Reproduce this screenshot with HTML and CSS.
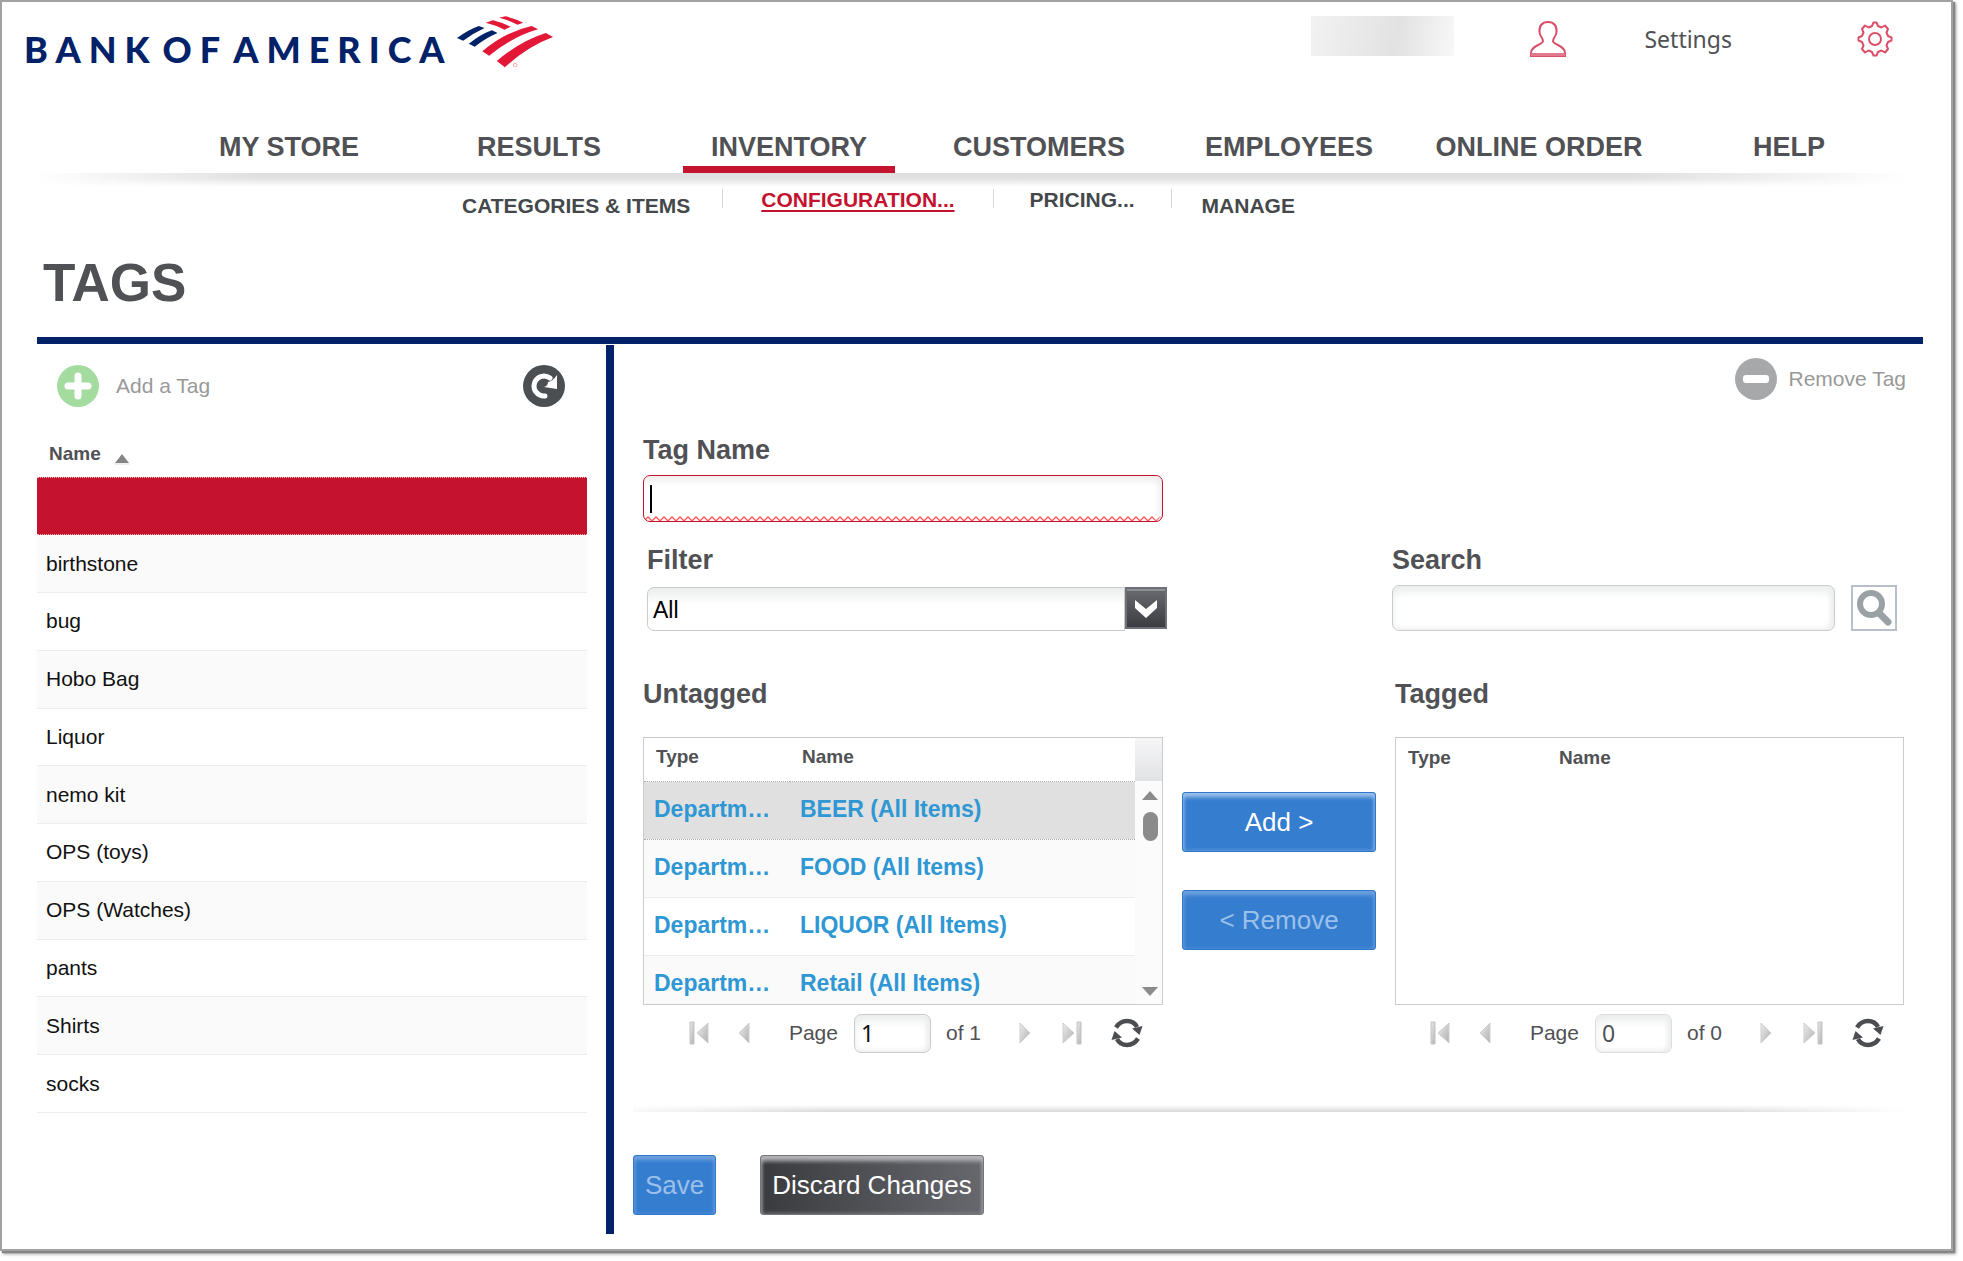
FILE: index.html
```html
<!DOCTYPE html>
<html lang="en">
<head>
<meta charset="utf-8">
<title>Tags</title>
<link rel="stylesheet" href="styles.css">
</head>
<body>
<svg class="sprite" aria-hidden="true">
  <defs>
    <linearGradient id="arrow-fill" x1="0" y1="0" x2="1" y2="1">
      <stop offset="0" stop-color="#ececec"/>
      <stop offset="1" stop-color="#b0b0b0"/>
    </linearGradient>
    <symbol id="first" viewBox="0 0 20 26">
      <path d="M1 2h4v22H1z" fill="url(#arrow-fill)" stroke="#c4c4c4"/>
      <path d="M19 3v20L8 13z" fill="url(#arrow-fill)" stroke="#cfcfcf"/>
    </symbol>
    <symbol id="prev" viewBox="0 0 12 26"><path d="M11 3v20L1 13z" fill="url(#arrow-fill)" stroke="#cfcfcf"/></symbol>
    <symbol id="next" viewBox="0 0 12 26"><path d="M1 3v20l10-10z" fill="url(#arrow-fill)" stroke="#cfcfcf"/></symbol>
    <symbol id="last" viewBox="0 0 20 26">
      <path d="M1 3v20l11-10z" fill="url(#arrow-fill)" stroke="#cfcfcf"/>
      <path d="M15 2h4v22h-4z" fill="url(#arrow-fill)" stroke="#c4c4c4"/>
    </symbol>
    <symbol id="reload" viewBox="0 0 32 30">
      <path d="M5 9.500Q9 3 16 3Q23 3 26 9" fill="none" stroke="#4b4d50" stroke-width="4.500"/>
      <path d="M21 10.500L31.500 8L28.500 17Z" fill="#4b4d50"/>
      <path d="M27 20.500Q23 27 16 27Q9 27 6 21" fill="none" stroke="#4b4d50" stroke-width="4.500"/>
      <path d="M11 19.500L.5 22L3.500 13Z" fill="#4b4d50"/>
    </symbol>
  </defs>
</svg>
<div class="page">
  <header class="header">
    <div class="logo">
      <div class="wordmark"><span>BANK</span> <span>OF</span> <span>AMERICA</span></div>
      <svg class="flag" viewBox="0 0 97 52" aria-hidden="true">
        <g transform="scale(.3827 .3333) translate(-1198 -46)">
          <path d="M1198 112Q1228 87 1255 76L1270 82Q1243 96 1214 120Z" fill="#012169"/>
          <path d="M1229 129Q1260 101 1289 89L1304 97Q1275 111 1244 138Z" fill="#012169"/>
          <path d="M1308 51L1325 47Q1350 54 1371 66L1356 72Q1333 58 1308 51Z" fill="#e31837"/>
          <path d="M1273 66L1292 59Q1317 66 1338 78L1322 87Q1299 73 1273 66Z" fill="#e31837"/>
          <path d="M1264 152Q1325 93 1393 76L1410 86Q1345 107 1282 165Z" fill="#e31837"/>
          <path d="M1302 181Q1365 120 1430 97L1449 109Q1382 137 1323 200Z" fill="#e31837"/>
          <circle cx="1350" cy="193" r="5" fill="none" stroke="#f08a98" stroke-width="2"/>
        </g>
      </svg>
    </div>
    <div class="account">
      <span class="user-name"></span>
      <svg class="person" viewBox="0 0 38 38" aria-hidden="true">
        <path d="M19 2C13 2 10 6 10.500 12C11 17 14 18 14 21C14 25 2 25 2 33V36H36V33C36 25 24 25 24 21C24 18 27 17 27.500 12C28 6 25 2 19 2Z" fill="none" stroke="#dc4f68" stroke-width="2"/>
        <path d="M2 34.500H36" stroke="#e4798c" stroke-width="3"/>
      </svg>
      <a class="settings" href="#settings">Settings</a>
      <svg class="gear" viewBox="0 0 36 36" aria-hidden="true">
        <path d="M15 5L16.500 1.500H19.500L21 5L24.500 6.500L28 4.500L31 8L29.500 11.500L31 15L34.500 16.500V19.500L31 21L29.500 24.500L31 28L28 31.500L24.500 29.500L21 31L19.500 34.500H16.500L15 31L11.500 29.500L8 31.500L5 28L6.500 24.500L5 21L1.500 19.500V16.500L5 15L6.500 11.500L5 8L8 4.500L11.500 6.500Z" fill="none" stroke="#dc4f68" stroke-width="2" stroke-linejoin="round"/>
        <circle cx="18" cy="18" r="6" fill="none" stroke="#dc4f68" stroke-width="2"/>
      </svg>
    </div>
  </header>

  <nav class="main-nav" aria-label="Main">
    <div class="nav-cell"><a href="#store">MY STORE</a></div>
    <div class="nav-cell"><a href="#results">RESULTS</a></div>
    <div class="nav-cell"><a class="current" href="#inventory">INVENTORY</a></div>
    <div class="nav-cell"><a href="#customers">CUSTOMERS</a></div>
    <div class="nav-cell"><a href="#employees">EMPLOYEES</a></div>
    <div class="nav-cell"><a href="#orders">ONLINE ORDER</a></div>
    <div class="nav-cell"><a href="#help">HELP</a></div>
  </nav>
  <div class="nav-shadow"></div>
  <nav class="sub-nav" aria-label="Inventory">
    <a class="plain" href="#categories">CATEGORIES &amp; ITEMS</a>
    <span class="bar"></span>
    <a class="current" href="#configuration">CONFIGURATION...</a>
    <span class="bar"></span>
    <a href="#pricing">PRICING...</a>
    <span class="bar"></span>
    <a class="plain" href="#manage">MANAGE</a>
  </nav>

  <main class="main">
    <h1 class="title">TAGS</h1>
    <div class="panels">
      <section class="tags">
        <div class="tags-tools">
          <button class="tool" type="button">
            <svg width="42" height="42" viewBox="0 0 42 42" aria-hidden="true"><circle cx="21" cy="21" r="21" fill="#a3dc9e"/><path d="M21 11v20M11 21h20" stroke="#fff" stroke-width="7" stroke-linecap="round"/></svg>
            Add a Tag
          </button>
          <button class="tool" type="button" aria-label="Refresh">
            <svg width="42" height="42" viewBox="0 0 42 42" aria-hidden="true"><circle cx="21" cy="21" r="21" fill="#4b4f52"/><path d="M22 31A10 10 0 1 1 27 13" fill="none" stroke="#fff" stroke-width="5" stroke-linecap="round"/><path d="M34 10V24L21 22Q25 21 25 17Q30 16 34 10Z" fill="#fff"/></svg>
          </button>
        </div>
        <table class="tag-list">
          <thead><tr><th>Name <svg width="16" height="11" viewBox="0 0 16 11" aria-hidden="true"><path d="M8 0l7 9H1z" fill="#858585"/><path d="M0 10h16" stroke="#ddd"/></svg></th></tr></thead>
          <tbody>
            <tr class="selected"><td></td></tr>
            <tr><td>birthstone</td></tr>
            <tr><td>bug</td></tr>
            <tr><td>Hobo Bag</td></tr>
            <tr><td>Liquor</td></tr>
            <tr><td>nemo kit</td></tr>
            <tr><td>OPS (toys)</td></tr>
            <tr><td>OPS (Watches)</td></tr>
            <tr><td>pants</td></tr>
            <tr><td>Shirts</td></tr>
            <tr><td>socks</td></tr>
          </tbody>
        </table>
      </section>

      <section class="detail">
        <div class="detail-tools">
          <button class="tool tool-remove" type="button">
            <svg width="42" height="42" viewBox="0 0 42 42" aria-hidden="true"><circle cx="21" cy="21" r="21" fill="#a7a8aa"/><rect x="8" y="17" width="26" height="8" rx="3" fill="#fff"/></svg>
            Remove Tag
          </button>
        </div>
        <div class="editor">
          <div class="field field-name">
            <label for="tag-name">Tag Name</label>
            <input class="box invalid" id="tag-name" type="text">
          </div>
          <div class="field field-filter">
            <label for="filter">Filter</label>
            <div class="combo">
              <select id="filter"><option>All</option></select>
              <svg class="combo-arrow" viewBox="0 0 42 42" aria-hidden="true">
                <defs><linearGradient id="combo-fill" x1="0" y1="0" x2="0" y2="1"><stop offset="0" stop-color="#696b70"/><stop offset="1" stop-color="#3b3c40"/></linearGradient></defs>
                <rect x="1" y="1" width="40" height="40" fill="url(#combo-fill)" stroke="#6d7077" stroke-width="2"/>
                <path d="M2 3H40" stroke="#8c8f96" stroke-width="2"/>
                <path d="M10 13L21 22L32 13V21L21 31L10 21Z" fill="#fff"/>
              </svg>
            </div>
          </div>
          <div class="field field-search">
            <label for="search">Search</label>
            <div class="search">
              <input class="box" id="search" type="text">
              <button class="search-go" type="button" aria-label="Search">
                <svg width="38" height="38" viewBox="0 0 38 38" aria-hidden="true"><circle cx="16" cy="15" r="11" fill="none" stroke="#9aa1a5" stroke-width="6"/><path d="M24 24L33 33" stroke="#9aa1a5" stroke-width="7" stroke-linecap="round"/></svg>
              </button>
            </div>
          </div>

          <div class="list untagged">
            <h2>Untagged</h2>
            <div class="grid-box">
              <table class="items">
                <thead><tr><th class="type">Type</th><th>Name</th></tr></thead>
                <tbody>
                  <tr class="active"><td>Department</td><td>BEER (All Items)</td></tr>
                  <tr><td>Department</td><td>FOOD (All Items)</td></tr>
                  <tr><td>Department</td><td>LIQUOR (All Items)</td></tr>
                  <tr><td>Department</td><td>Retail (All Items)</td></tr>
                </tbody>
              </table>
              <div class="scroll" aria-hidden="true">
                <div class="scroll-top"></div>
                <div class="scroll-track">
                  <svg width="16" height="9" viewBox="0 0 16 9"><path d="M8 0l8 9H0z" fill="#8b8b8b"/></svg>
                  <div class="thumb"></div>
                  <svg width="16" height="9" viewBox="0 0 16 9"><path d="M8 9l8-9H0z" fill="#8b8b8b"/></svg>
                </div>
              </div>
            </div>
            <div class="pager">
              <button type="button" aria-label="First page"><svg width="20" height="26"><use href="#first"/></svg></button>
              <button class="prev" type="button" aria-label="Previous page"><svg width="12" height="26"><use href="#prev"/></svg></button>
              <label for="page-untagged">Page</label>
              <input class="box" id="page-untagged" type="text" value="1">
              <span class="total">of 1</span>
              <button type="button" aria-label="Next page"><svg width="12" height="26"><use href="#next"/></svg></button>
              <button class="last" type="button" aria-label="Last page"><svg width="20" height="26"><use href="#last"/></svg></button>
              <button type="button" aria-label="Reload"><svg width="32" height="30"><use href="#reload"/></svg></button>
            </div>
          </div>

          <div class="moves">
            <button class="btn blue" type="button">Add &gt;</button>
            <button class="btn blue" type="button" disabled>&lt; Remove</button>
          </div>

          <div class="list tagged">
            <h2>Tagged</h2>
            <div class="grid-box">
              <table class="items">
                <thead><tr><th class="type">Type</th><th>Name</th></tr></thead>
              </table>
            </div>
            <div class="pager">
              <button type="button" aria-label="First page"><svg width="20" height="26"><use href="#first"/></svg></button>
              <button class="prev" type="button" aria-label="Previous page"><svg width="12" height="26"><use href="#prev"/></svg></button>
              <label for="page-tagged">Page</label>
              <input class="box muted" id="page-tagged" type="text" value="0">
              <span class="total">of 0</span>
              <button type="button" aria-label="Next page"><svg width="12" height="26"><use href="#next"/></svg></button>
              <button class="last" type="button" aria-label="Last page"><svg width="20" height="26"><use href="#last"/></svg></button>
              <button type="button" aria-label="Reload"><svg width="32" height="30"><use href="#reload"/></svg></button>
            </div>
          </div>
        </div>
        <div class="divider"></div>
        <div class="actions">
          <button class="btn blue" type="button" disabled>Save</button>
          <button class="btn dark" type="button">Discard Changes</button>
        </div>
      </section>
    </div>
  </main>
</div>
</body>
</html>
```
FILE: styles.css
```css
* { box-sizing: border-box; }

body {
  margin: 0;
  padding: 0 10px 10px 0;
  background: #fff;
  color: #505154;
  font: 21px/30px "Liberation Sans", Arial, sans-serif;
}

button, input, select { font: inherit; color: inherit; }
button { padding: 0; border: 0; background: none; }
svg { display: block; flex: none; }
a { color: inherit; text-decoration: none; }
h1, h2 { margin: 0; }

.sprite { position: absolute; width: 0; height: 0; }

.page {
  border: 2px solid #a2a2a2;
  box-shadow: 2px 2px 1px #868686, 3px 3px 3px #999;
}

/* Header */
.header {
  display: flex;
  justify-content: space-between;
  align-items: flex-start;
  height: 118px;
  padding: 14px 58px 0 22px;
}
.logo { display: flex; gap: 4px; }
.wordmark {
  display: flex;
  gap: 5px;
  padding-top: 13px;
  color: #012169;
  font: 900 36px/40px Lato, sans-serif;
  letter-spacing: 8px;
  white-space: nowrap;
}
.flag { width: 97px; height: 52px; }
.account { display: flex; }
.user-name {
  width: 143px;
  height: 40px;
  margin-right: 75px;
  background: linear-gradient(100deg, #f2f2f2, #e2e2e2 60%, #f8f8f8);
}
.person { width: 38px; height: 38px; margin: 4px 77px 0 0; }
.settings { margin: 8px 125px 0 0; font: 23px/30px "Noto Sans", sans-serif; }
.gear { width: 36px; height: 36px; margin-top: 5px; }

.main-nav {
  display: flex;
  padding: 0 37px 0 162px;
  font-size: 27px;
  font-weight: bold;
}
.nav-cell { flex: 1; display: flex; justify-content: center; min-width: 0; white-space: nowrap; }
.nav-cell a { height: 53px; padding: 12px 22px 0; }
.nav-cell .current { padding: 12px 28px 0; border-bottom: 7px solid #c4122f; }
.nav-shadow {
  height: 14px;
  margin: 0 42px 0 32px;
  background: linear-gradient(#dedede, #e2e2e2 40%, #fff);
  -webkit-mask-image: linear-gradient(90deg, transparent, #000 12%, #000 85%, transparent);
  mask-image: linear-gradient(90deg, transparent, #000 12%, #000 85%, transparent);
}
.sub-nav {
  display: flex;
  height: 37px;
  padding-left: 460px;
  color: #44484a;
  font-size: 21px;
  font-weight: bold;
  line-height: 26px;
}
.sub-nav .plain { padding-top: 6px; }
.sub-nav .current { color: #c4122f; text-decoration: underline; text-decoration-thickness: 2px; text-underline-offset: 3px; }
.bar { width: 1px; height: 19px; margin: 2px 36px 0 38px; background: #d6d6d6; }
.bar:first-of-type { margin: 2px 38px 0 32px; }
.bar:last-of-type { margin: 2px 30px 0 36px; }

/* Page body */
.main { padding: 0 28px 15px 35px; }
.title {
  height: 120px;
  padding: 26px 0 0 6px;
  border-bottom: 7px solid #012169;
  font-size: 53px;
  line-height: 66px;
}
.panels { display: flex; margin-top: 1px; }

/* Tag list */
.tags { flex: 0 0 550px; padding-top: 20px; }
.tags-tools { display: flex; justify-content: space-between; padding: 0 22px 0 20px; }
.tool { display: flex; align-items: center; gap: 17px; color: #999; }
.tag-list { width: 100%; height: 682px; margin-top: 24px; border-collapse: collapse; color: #111; }
.tag-list th {
  height: 46px;
  padding: 0 12px;
  color: #505154;
  font-size: 19px;
  text-align: left;
}
.tag-list th svg { display: inline-block; margin: 10px 0 0 8px; vertical-align: middle; }
.tag-list td { height: 57px; padding: 0 9px; border-bottom: 1px solid #ededed; }
.tag-list tbody tr:nth-child(even) { background: #fafafa; }
.tag-list .selected td { background: #c4122f; border-top: 1px dotted #dba; border-bottom: 1px dotted #dba; }

/* Tag editor */
.detail {
  flex: 1;
  margin-left: 19px;
  padding: 13px 15px 19px 19px;
  border-left: 8px solid #012169;
}
.detail-tools { display: flex; justify-content: flex-end; }
.tool-remove { gap: 11px; margin-right: 2px; }
.editor {
  display: grid;
  grid-template-columns: 520fr 194px 509fr;
  grid-template-areas:
    "name . ."
    "filter . search"
    "untagged moves tagged";
  column-gap: 19px;
  padding: 35px 4px 0 10px;
}
.field-name { grid-area: name; }
.field-filter { grid-area: filter; margin: 23px -4px 0 4px; }
.field-search { grid-area: search; margin: 23px 7px 0 -3px; }
.field label, .list h2 { display: block; font-size: 27px; font-weight: bold; line-height: 30px; }
.box {
  width: 100%;
  height: 46px;
  padding: 0 6px;
  border: 1px solid #c9cbcc;
  border-radius: 7px;
  background: #fff;
  box-shadow: inset 0 6px 8px #ebeded, inset -3px -2px 5px #eee;
}
.invalid {
  height: 47px;
  margin-top: 10px;
  border-color: #c4122f;
  background:
    linear-gradient(#000, #000) 6px 9px / 2px 28px no-repeat,
    url("data:image/svg+xml,%3Csvg xmlns='http://www.w3.org/2000/svg' width='8' height='5'%3E%3Cpath d='M0 5L4 1L8 5' fill='none' stroke='%23f55' stroke-width='1.3'/%3E%3C/svg%3E") 0 100% repeat-x;
  box-shadow: inset -3px 5px 6px #eee;
}
.combo { position: relative; margin-top: 12px; }
.combo select {
  display: block;
  width: calc(100% - 42px);
  height: 44px;
  padding: 1px 5px 0;
  border: 1px solid #c9cbcc;
  border-radius: 7px 0 0 7px;
  background: linear-gradient(#ebeded, #fff 40%);
  color: #000;
  font-size: 23px;
  appearance: none;
}
.combo-arrow { position: absolute; top: 0; right: 0; width: 42px; height: 42px; pointer-events: none; }
.search { display: flex; gap: 16px; margin-top: 10px; }
.search .box { flex: 1; }
.search-go {
  display: flex;
  align-items: center;
  justify-content: center;
  width: 46px;
  height: 46px;
  border: 2px solid #b9becb;
}

.list { padding-top: 48px; }
.untagged { grid-area: untagged; }
.tagged { grid-area: tagged; }
.grid-box { display: flex; height: 268px; margin-top: 28px; border: 1px solid #ccc; overflow: hidden; }
.items { flex: 1; width: 100%; min-width: 0; table-layout: fixed; border-collapse: collapse; align-self: flex-start; }
.items th { height: 43px; padding: 0 12px 4px; font-size: 19px; text-align: left; }
.items .type { width: 146px; }
.tagged .type { width: 151px; }
.items td {
  height: 58px;
  padding: 0 10px 2px;
  border-bottom: 1px solid #ececec;
  color: #2e97d4;
  font-size: 23px;
  font-weight: bold;
  overflow: hidden;
  text-overflow: ellipsis;
  white-space: nowrap;
}
.items tbody tr:nth-child(even) { background: #fafafa; }
.items .active td { background: #e0e0e0; border-top: 1px dotted #aaa; border-bottom: 1px dotted #aaa; }
.scroll { display: flex; flex: none; flex-direction: column; width: 27px; }
.scroll-top { height: 43px; background: linear-gradient(#f6f6f7, #e1e2e4); }
.scroll-track {
  flex: 1;
  display: flex;
  flex-direction: column;
  align-items: center;
  padding: 10px 0 8px 3px;
  background: #fbfbfb;
}
.thumb { width: 15px; height: 29px; margin: 12px 0 auto; border-radius: 8px; background: #8b8b8b; }

.pager { display: flex; align-items: center; justify-content: flex-end; height: 56px; padding-right: 20px; }
.pager .prev { margin: 0 39px 0 29px; }
.pager .box { width: 77px; height: 39px; margin: 0 15px 0 16px; font: 23px/30px "Noto Sans", sans-serif; color: #111; }
.pager .muted { color: #505154; border-color: #ddd; }
.pager .total { margin-right: 38px; }
.pager .last { margin: 0 29px 0 31px; }

.moves { grid-area: moves; display: flex; flex-direction: column; gap: 38px; padding-top: 161px; }
.btn { height: 60px; padding: 0 11px; border-radius: 3px; color: #fff; font-size: 26px; white-space: nowrap; }
.blue { border: 1px solid #2f78c9; background: #357dcf; box-shadow: inset 0 4px 4px #9fc1e9, inset 0 0 4px #74a6e0; }
.blue:disabled { color: #9cc0e9; box-shadow: inset 0 4px 4px #6fa2de, inset 0 0 4px #5a95da; }
.dark { border: 1px solid #74767c; background: linear-gradient(90deg, #3a3b3e, #67686e); box-shadow: inset 0 5px 4px #b5b5b9, inset 0 0 4px #8b8c92; }

.divider {
  height: 7px;
  margin-top: 44px;
  background: linear-gradient(#fff, #d9d9d9);
  -webkit-mask-image: linear-gradient(90deg, #0003, #000 15%, #000 85%, transparent);
  mask-image: linear-gradient(90deg, #0003, #000 15%, #000 85%, transparent);
}
.actions { display: flex; gap: 44px; padding-top: 43px; }
```
